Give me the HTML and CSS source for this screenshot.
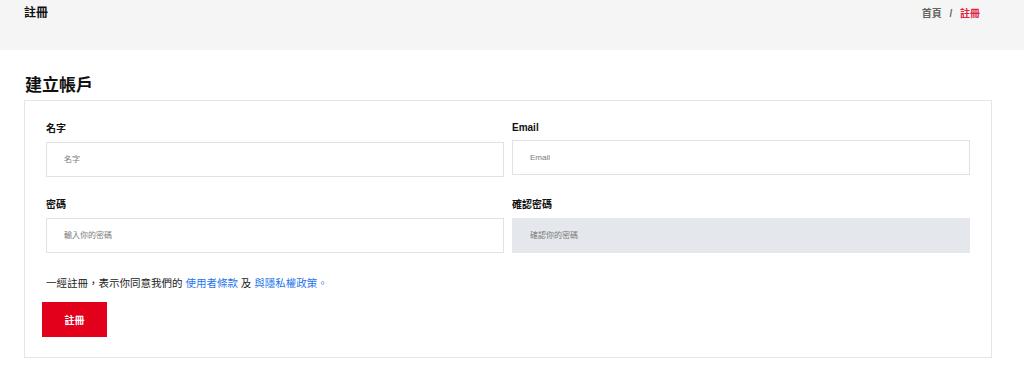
FILE: index.html
```html
<!DOCTYPE html>
<html lang="zh-Hant">
<head>
    <meta charset="UTF-8">
    <meta name="viewport" content="width=device-width, initial-scale=1.0">
    <title>註冊</title>
    <link rel="stylesheet" href="styles.css">
</head>
<body>
    <!-- Page header -->
    <div class="page-header">
        <h1 class="page-title">註冊</h1>
        <div class="breadcrumb">
            <a href="#">首頁</a>
            <span class="sep">/</span>
            <span class="current">註冊</span>
        </div>
    </div>

    <!-- Register Section -->
    <div class="content">
        <h2 class="section-title">建立帳戶</h2>
        <div class="card">
            <form id="registerForm">
                <div class="form-grid">
                    <div class="form-group">
                        <label for="name">名字</label>
                        <input type="text" id="name" name="name" placeholder="名字">
                    </div>
                    <div class="form-group">
                        <label for="email" class="latin">Email</label>
                        <input type="email" id="email" name="email" placeholder="Email">
                    </div>
                    <div class="form-group">
                        <label for="password">密碼</label>
                        <input type="password" id="password" name="password" placeholder="輸入你的密碼">
                    </div>
                    <div class="form-group">
                        <label for="confirmPassword">確認密碼</label>
                        <input type="password" id="confirmPassword" name="confirmPassword" class="locked" placeholder="確認你的密碼">
                    </div>
                </div>
                <p class="terms">一經註冊，表示你同意我們的 <a href="#">使用者條款</a> 及 <a href="#">與隱私權政策。</a></p>
                <button type="submit">註冊</button>
            </form>
        </div>
    </div>
</body>
</html>
```

FILE: styles.css
```css
body {
    font-family: "Liberation Sans", "Noto Sans CJK TC", sans-serif;
    margin: 0;
    padding: 0;
    background: #fff;
    color: #222;
}
.page-header {
    display: flex;
    justify-content: space-between;
    align-items: flex-start;
    height: 50px;
    box-sizing: border-box;
    padding: 5px 44px 0 24px;
    background: #f5f5f5;
}
.page-title {
    margin: 0;
    font-size: 12px;
    line-height: 17px;
    font-weight: bold;
    color: #111;
}
.breadcrumb {
    font-size: 10px;
    line-height: 17px;
    font-weight: bold;
    color: #666;
}
.breadcrumb a {
    color: #666;
    text-decoration: none;
}
.breadcrumb .sep {
    margin: 0 5px;
}
.breadcrumb .current {
    color: #e3223d;
}
.content {
    padding: 0 32px 0 24px;
}
.section-title {
    margin: 24px 0 2px 1px;
    font-size: 17px;
    line-height: 24px;
    font-weight: bold;
    color: #111;
}
.card {
    border: 1px solid #e5e5e5;
    padding: 21px 17px 20px 17px;
}
.form-grid {
    display: grid;
    grid-template-columns: 1fr 1fr;
    row-gap: 21px;
}
.form-group {
    padding: 0 4px;
}
.form-group label {
    display: block;
    margin-bottom: 6px;
    font-size: 10px;
    line-height: 14px;
    font-weight: bold;
    color: #111;
}
.form-group label.latin {
    line-height: 12px;
}
.form-group input {
    display: block;
    width: 100%;
    height: 35px;
    box-sizing: border-box;
    padding: 0 17px;
    border: 1px solid #e2e2e2;
    border-radius: 0;
    background: #fff;
    font-family: inherit;
    font-size: 8px;
    color: #333;
    outline: none;
}
.form-group input::placeholder {
    color: #7a7a7a;
}
.form-group input.locked {
    background: #e4e7eb;
    border-color: #e4e7eb;
}
.terms {
    margin: 22px 0 11px 0;
    padding: 0 4px;
    font-size: 10.5px;
    line-height: 16px;
    color: #222;
}
.terms a {
    color: #1f74ec;
    text-decoration: none;
}
.terms a:hover {
    text-decoration: underline;
}
button {
    display: block;
    width: 65px;
    height: 35px;
    border: none;
    background: #e2001a;
    color: #fff;
    font-family: inherit;
    font-size: 10px;
    font-weight: bold;
    cursor: pointer;
}
```
